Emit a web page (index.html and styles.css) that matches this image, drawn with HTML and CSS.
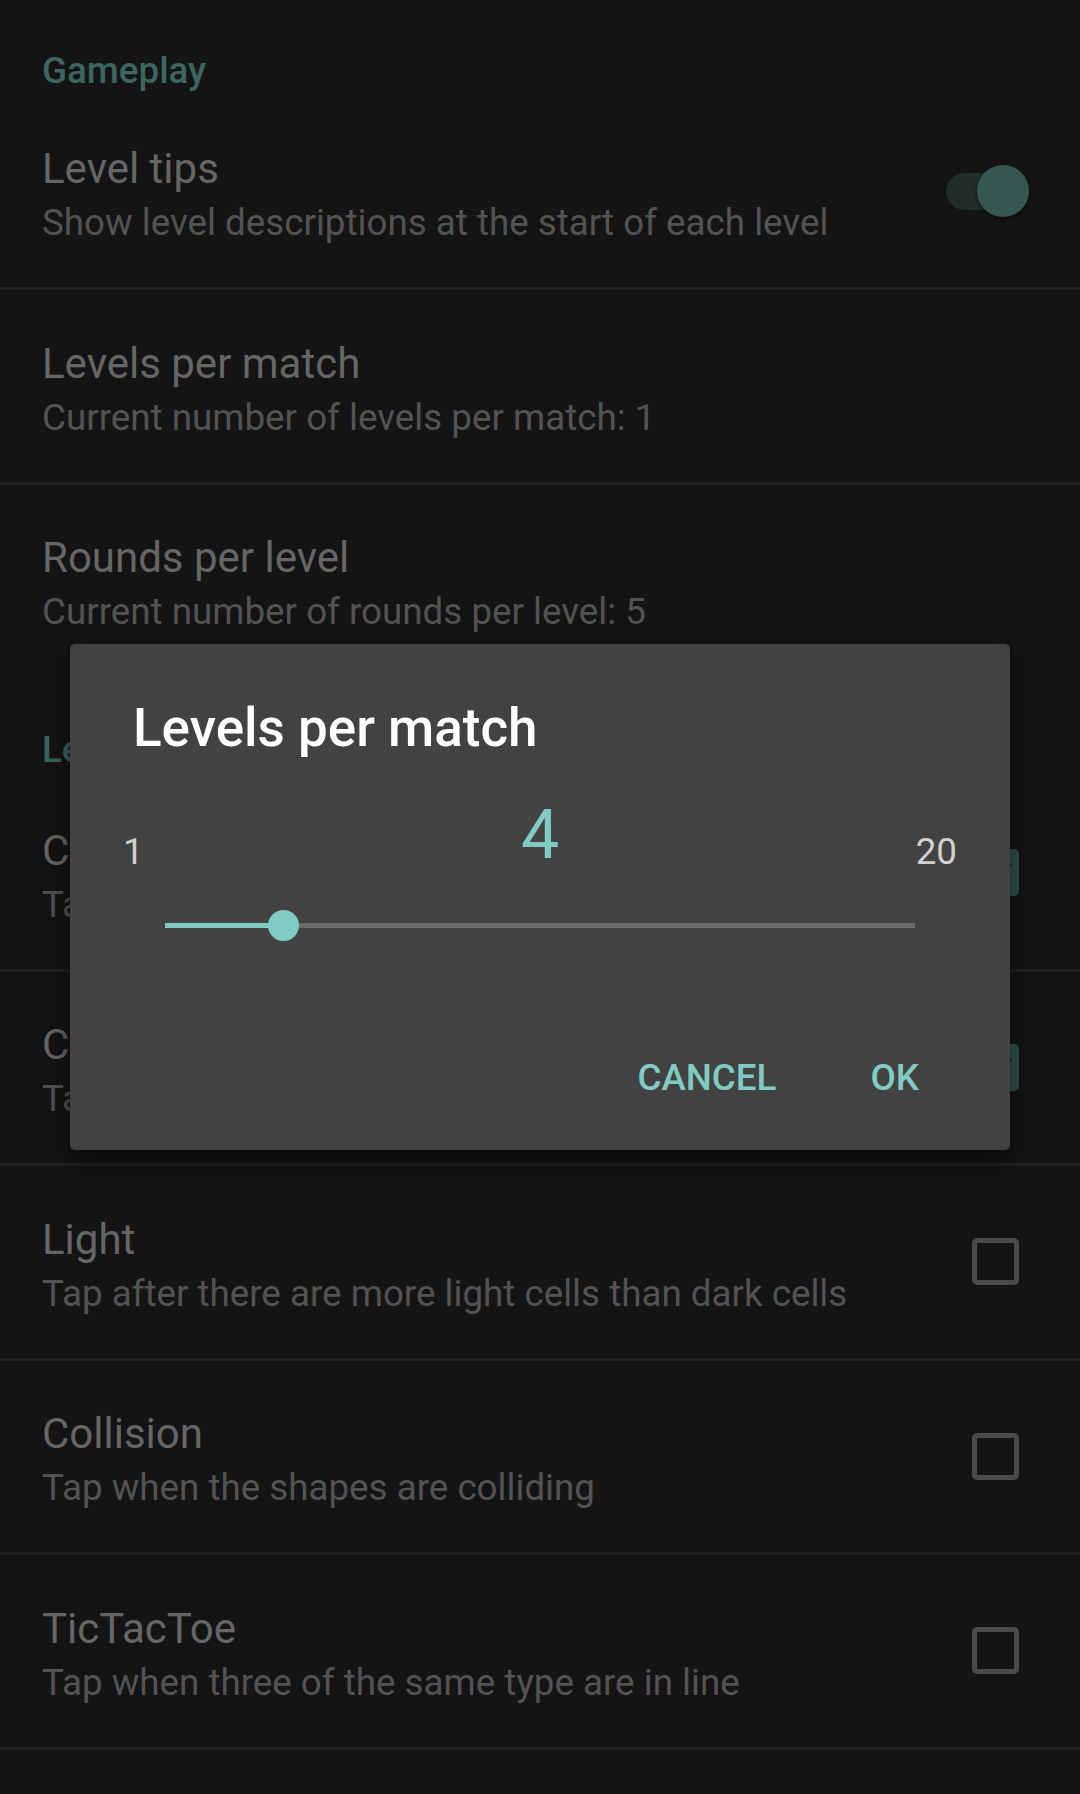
FILE: index.html
```html
<!DOCTYPE html>
<html lang="en">
<head>
<meta charset="utf-8">
<title>Settings</title>
<link rel="stylesheet" href="styles.css">
</head>
<body>
<div class="screen">
  <div class="category">Gameplay</div>
  <div class="pref">
    <div class="pref-text">
      <div class="pref-title">Level tips</div>
      <div class="pref-summary">Show level descriptions at the start of each level</div>
    </div>
    <div class="switch"><span class="switch-track"></span><span class="switch-thumb"></span></div>
  </div>
  <div class="pref">
    <div class="pref-text">
      <div class="pref-title">Levels per match</div>
      <div class="pref-summary">Current number of levels per match: 1</div>
    </div>
  </div>
  <div class="pref pref-last">
    <div class="pref-text">
      <div class="pref-title">Rounds per level</div>
      <div class="pref-summary">Current number of rounds per level: 5</div>
    </div>
  </div>
  <div class="category category-second">Levels</div>
  <div class="pref">
    <div class="pref-text">
      <div class="pref-title">Color</div>
      <div class="pref-summary">Tap when the colors match</div>
    </div>
    <svg class="checkbox" width="47" height="47" viewBox="0 0 47 47"><rect x="0" y="0" width="47" height="47" rx="5" fill="#2f524d"/><path d="M10 24 L19 33 L38 14" fill="none" stroke="#141414" stroke-width="5"/></svg>
  </div>
  <div class="pref">
    <div class="pref-text">
      <div class="pref-title">Count</div>
      <div class="pref-summary">Tap when the counts are equal</div>
    </div>
    <svg class="checkbox" width="47" height="47" viewBox="0 0 47 47"><rect x="0" y="0" width="47" height="47" rx="5" fill="#2f524d"/><path d="M10 24 L19 33 L38 14" fill="none" stroke="#141414" stroke-width="5"/></svg>
  </div>
  <div class="pref">
    <div class="pref-text">
      <div class="pref-title">Light</div>
      <div class="pref-summary">Tap after there are more light cells than dark cells</div>
    </div>
    <span class="checkbox checkbox-empty"></span>
  </div>
  <div class="pref">
    <div class="pref-text">
      <div class="pref-title">Collision</div>
      <div class="pref-summary">Tap when the shapes are colliding</div>
    </div>
    <span class="checkbox checkbox-empty"></span>
  </div>
  <div class="pref">
    <div class="pref-text">
      <div class="pref-title">TicTacToe</div>
      <div class="pref-summary">Tap when three of the same type are in line</div>
    </div>
    <span class="checkbox checkbox-empty"></span>
  </div>

  <div class="dialog">
    <div class="dialog-title">Levels per match</div>
    <div class="value-row">
      <span class="value-min">1</span>
      <span class="value-current">4</span>
      <span class="value-max">20</span>
    </div>
    <div class="slider">
      <span class="slider-active" style="width: 15.79%"></span>
      <span class="slider-thumb" style="left: 15.79%"></span>
    </div>
    <div class="dialog-actions">
      <span class="dialog-btn">CANCEL</span>
      <span class="dialog-btn">OK</span>
    </div>
  </div>
</div>
</body>
</html>
```

FILE: styles.css
```css
html, body {
  margin: 0;
  padding: 0;
  background: #141414;
}

.screen {
  position: relative;
  width: 1080px;
  height: 1794px;
  overflow: hidden;
  background: #141414;
  font-family: Roboto, "Liberation Sans", sans-serif;
}

.category {
  box-sizing: border-box;
  height: 95.5px;
  padding: 49px 0 0 42px;
  font-size: 36.75px;
  line-height: 43px;
  font-weight: 500;
  color: #3d6660;
}

.category-second {
  height: 98px;
}

.pref {
  box-sizing: border-box;
  height: 194.5px;
  border-bottom: 3px solid #212121;
  padding: 0 61px 0 42px;
  display: flex;
  justify-content: space-between;
  align-items: center;
}

.pref-last {
  border-bottom-color: transparent;
}

.pref-text {
  align-self: stretch;
  padding-top: 48.5px;
}

.pref-title {
  font-size: 42px;
  line-height: 50px;
  color: #666666;
}

.pref-summary {
  margin-top: 7px;
  font-size: 36.75px;
  line-height: 44px;
  color: #535353;
}

.checkbox {
  display: block;
  flex: none;
  width: 47px;
  height: 47px;
}

.checkbox-empty {
  box-sizing: border-box;
  border: 5px solid #4a4a4a;
  border-radius: 5px;
}

.switch {
  position: relative;
  flex: none;
  width: 83px;
  height: 53px;
  margin-right: -10px;
}

.switch-track {
  position: absolute;
  left: 0;
  top: 8px;
  width: 76px;
  height: 37px;
  border-radius: 18.5px;
  background: #202d2a;
}

.switch-thumb {
  position: absolute;
  right: 0;
  top: 0;
  width: 52px;
  height: 52px;
  border-radius: 50%;
  background: #36574f;
  box-shadow: 0 2px 4px rgba(0, 0, 0, 0.5);
}

.dialog {
  position: absolute;
  left: 70px;
  top: 644px;
  width: 940px;
  height: 506px;
  box-sizing: border-box;
  background: #424242;
  border-radius: 5px;
  box-shadow: 0 10px 30px rgba(0, 0, 0, 0.55);
}

.dialog-title {
  padding: 53px 63px 0 63px;
  font-size: 53px;
  line-height: 62px;
  font-weight: 500;
  color: #ffffff;
}

.value-row {
  margin-top: 36px;
  padding: 0 53px 0 53px;
  height: 80px;
  display: flex;
  justify-content: space-between;
  align-items: flex-start;
}

.value-min,
.value-max {
  margin-top: 35px;
  font-size: 36.75px;
  line-height: 43px;
  color: #d0d0d0;
  min-width: 60px;
}

.value-max {
  text-align: right;
}

.value-current {
  font-size: 68px;
  line-height: 80px;
  color: #80cbc4;
}

.slider {
  position: relative;
  margin: 34.5px 95px 0 95px;
  height: 32px;
  background: linear-gradient(#6b6b6b, #6b6b6b) no-repeat 0 13.5px / 100% 5px;
}

.slider-active {
  position: absolute;
  left: 0;
  top: 13.5px;
  height: 5px;
  background: #80cbc4;
}

.slider-thumb {
  position: absolute;
  top: 0.25px;
  width: 31.5px;
  height: 31.5px;
  margin-left: -15.75px;
  border-radius: 50%;
  background: #80cbc4;
}

.dialog-actions {
  margin-top: 114px;
  padding-right: 91px;
  display: flex;
  justify-content: flex-end;
  gap: 94px;
}

.dialog-btn {
  font-size: 36.75px;
  line-height: 43px;
  font-weight: 500;
  color: #80cbc4;
}
```
